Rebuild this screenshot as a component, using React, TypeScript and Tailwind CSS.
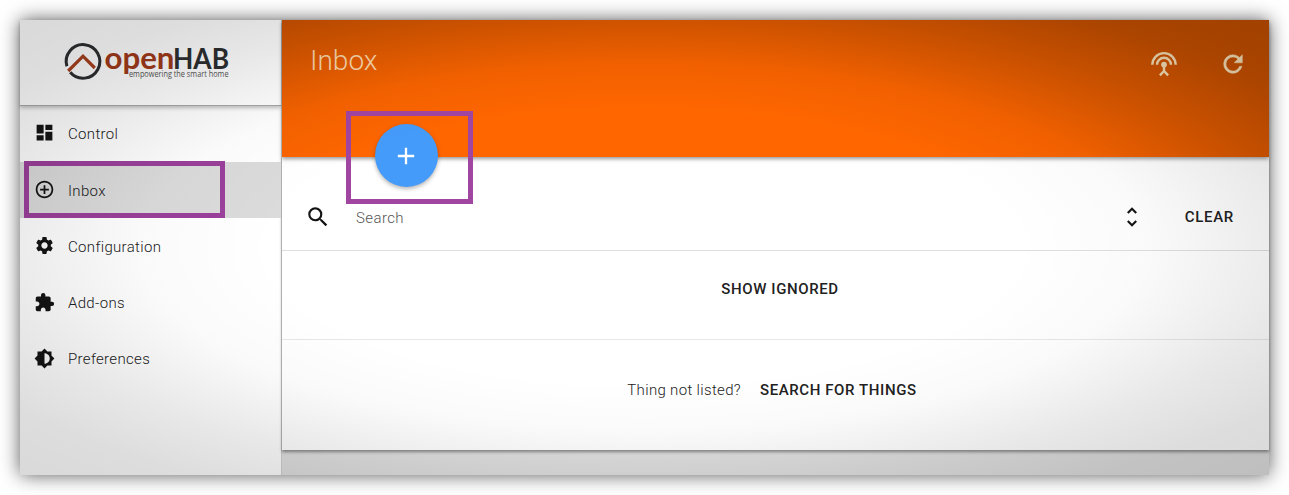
import React from "react";
import {
  MdAdd,
  MdAddCircleOutline,
  MdBrightness6,
  MdDashboard,
  MdExtension,
  MdSearch,
  MdSettings,
  MdUnfoldMore,
} from "react-icons/md";

const navItems = [
  { label: "Control", Icon: MdDashboard, iconClass: "mb-[3px]", textClass: "" },
  { label: "Inbox", Icon: MdAddCircleOutline, iconClass: "mb-px", textClass: "pt-0.5" },
  { label: "Configuration", Icon: MdSettings, iconClass: "mb-0.5", textClass: "pt-0.5" },
  { label: "Add-ons", Icon: MdExtension, iconClass: "", textClass: "pt-0.5" },
  { label: "Preferences", Icon: MdBrightness6, iconClass: "", textClass: "pt-0.5" },
];

function Logo() {
  return (
    <svg width="166" height="40" viewBox="0 0 166 40" overflow="visible" aria-label="openHAB">
      <path d="M2.9 23.2A16.8 16.8 0 1 1 6.2 29.3" fill="none" stroke="#2c2e30" strokeWidth="3" />
      <path d="M4.2 28 19 13.2 30.8 25" fill="none" stroke="#a8401e" strokeWidth="3.2" />
      <text x="40.5" y="26.2" fontFamily="Lato, sans-serif" fontSize="31" fontWeight="700" fill="#a03a1a" textLength="70" lengthAdjust="spacingAndGlyphs">open</text>
      <text x="109" y="25.8" fontFamily="Lato, sans-serif" fontSize="28" fontWeight="700" fill="#2c2e30" textLength="56" lengthAdjust="spacingAndGlyphs">HAB</text>
      <text x="65" y="33.8" fontFamily="'Open Sans', sans-serif" fontSize="8.2" fill="#555" textLength="99.5" lengthAdjust="spacingAndGlyphs">empowering the smart home</text>
    </svg>
  );
}

function AntennaIcon({ className }: { className: string }) {
  return (
    <svg viewBox="0 0 28 28" className={className} fill="none" stroke="currentColor" strokeWidth="2.4">
      <path d="M2.3 14.8a11.7 11.7 0 0 1 23.4 0M7 14.8a7 7 0 0 1 14 0" />
      <path d="M14 15v6M9.9 25.4 14 21l4.1 4.4" />
      <circle cx="14" cy="14.6" r="2.9" fill="currentColor" stroke="none" />
    </svg>
  );
}

function RefreshIcon({ className }: { className: string }) {
  return (
    <svg viewBox="0 0 24 24" className={className} fill="currentColor" stroke="currentColor" strokeWidth="0.4">
      <path d="M17.65 6.35A7.96 7.96 0 0 0 12 4a8 8 0 1 0 7.73 10h-2.08A6 6 0 1 1 12 6c1.66 0 3.14.69 4.22 1.78L13 11h7V4l-2.35 2.35z" />
    </svg>
  );
}

function Sidebar() {
  return (
    <aside className="flex w-[262px] shrink-0 flex-col border-r border-[#cfcfcf] bg-white">
      <div className="flex h-[86px] items-center border-b border-[#a8a8a8] pl-11 shadow-[0_2px_4px_rgba(0,0,0,0.25)]">
        <Logo />
      </div>
      <nav className="flex flex-col">
        {navItems.map(({ label, Icon, iconClass, textClass }) => (
          <a
            key={label}
            className={
              label === "Inbox"
                ? "relative flex h-14 items-center bg-[#dbdbdb] pl-[14px]"
                : "relative flex h-14 items-center pl-[14px]"
            }
          >
            <span className={iconClass}>
              <Icon className="block size-[21px] text-[#141414]" />
            </span>
            <span className={textClass}>
              <span className="ml-[13px] text-[15px] font-light tracking-[0.33px] text-[#212121]">{label}</span>
            </span>
            {label === "Inbox" && (
              <span className="absolute -top-px left-1 h-[57px] w-[201px] border-[5px] border-[#9b409b]" />
            )}
          </a>
        ))}
      </nav>
    </aside>
  );
}

export default function App() {
  return (
    <div className="h-[495px] w-[1289px] overflow-hidden bg-white p-5 font-[Roboto,sans-serif]">
      <div className="relative flex h-[455px] w-[1249px] shadow-[0_0_18px_rgba(0,0,0,0.65)]">
        <Sidebar />
        <main className="flex min-w-0 flex-1 flex-col bg-[#e0e0e0]">
          <header className="relative z-10 flex h-[137px] shrink-0 bg-[#ff6600] bg-[radial-gradient(ellipse_883px_322px_at_362px_227px,transparent_42%,rgba(0,0,0,0.04)_57%,rgba(0,0,0,0.15)_74%,rgba(0,0,0,0.23)_87%,rgba(0,0,0,0.26)_100%)] pl-7 shadow-[0_2px_4px_rgba(0,0,0,0.4)]">
            <h1 className="mt-[25px] flex-1 text-[28px] leading-8 font-light text-[#f8d4a8]">Inbox</h1>
            <AntennaIcon className="mt-[30px] mr-[41px] size-7 text-[#f4dcb4]" />
            <RefreshIcon className="mt-[30px] mr-[22px] size-7 text-[#f4dcb4]" />
            <div className="absolute top-[91px] left-[64px] flex h-[93px] w-[127px] justify-center border-[5px] border-[#a045a0] pt-2">
              <button className="-ml-[7px] flex size-[63px] items-center justify-center rounded-full bg-[#459bfa] shadow-[0_2px_4px_rgba(0,0,0,0.3)]">
                <MdAdd className="size-7 text-white" />
              </button>
            </div>
          </header>
          <section className="flex h-[293px] flex-col bg-white shadow-[0_2px_3px_rgba(0,0,0,0.4)]">
            <div className="flex h-[94px] items-center border-b border-[#dedede] pt-[27px] pl-[23px]">
              <MdSearch className="size-[26px] text-[#141414]" />
              <span className="ml-[25px] flex-1 pt-0.5 text-[15px] font-light tracking-[0.4px] text-[#555]">Search</span>
              <MdUnfoldMore className="size-[26px] text-[#141414]" />
              <button className="mr-[35px] ml-10 text-[15px] font-medium tracking-[0.7px] text-[#212121]">CLEAR</button>
            </div>
            <div className="flex h-[89px] items-start justify-center border-b border-[#e8e8e8] pt-[27px] pl-[9px]">
              <button className="text-[15px] font-medium tracking-[0.6px] text-[#212121]">SHOW IGNORED</button>
            </div>
            <div className="flex flex-1 items-start justify-center gap-[19px] pt-[39px] pr-[7px]">
              <span className="text-[15px] font-light tracking-[0.33px] text-[#212121]">Thing not listed?</span>
              <button className="text-[15px] font-medium tracking-[0.6px] text-[#212121]">SEARCH FOR THINGS</button>
            </div>
          </section>
        </main>
        <div className="pointer-events-none absolute inset-0 z-20 bg-[radial-gradient(ellipse_883px_322px_at_center,transparent_42%,rgba(0,0,0,0.02)_57%,rgba(0,0,0,0.09)_74%,rgba(0,0,0,0.135)_87%,rgba(0,0,0,0.15)_100%)]" />
      </div>
    </div>
  );
}
